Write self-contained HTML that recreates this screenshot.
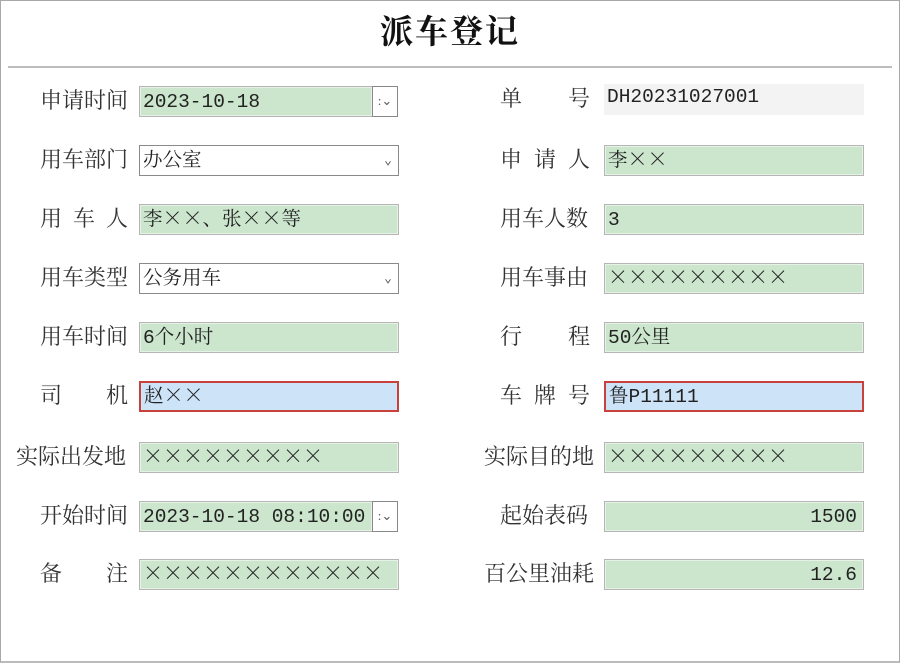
<!DOCTYPE html>
<html><head><meta charset="utf-8"><style>
*{margin:0;padding:0;box-sizing:border-box}
body{width:900px;height:663px;background:#fff;position:relative;overflow:hidden;font-family:"Liberation Serif","Noto Serif CJK SC",serif;color:#222}
.frame{position:absolute;left:0;top:0;width:900px;height:663px;border:1px solid #a8a8a8;border-bottom:2px solid #bbb}
.title{position:absolute;left:0;width:900px;top:6px;text-align:center;font-size:33px;font-weight:bold;letter-spacing:2px;color:#111}
.hr{position:absolute;left:8px;right:8px;top:66px;height:2px;background:#bdbdbd}
.lab{position:absolute;height:30px;line-height:30px;font-size:22px;display:flex;justify-content:space-between;color:#333}
.f{position:absolute;height:31px;line-height:30px;font-size:19.5px;padding-left:3px;white-space:pre;overflow:hidden;font-family:"Liberation Mono","Noto Serif CJK SC",monospace;color:#222}
.x{font-family:"Noto Sans CJK SC",sans-serif;font-size:20px;font-weight:300;line-height:0}
.g{background:#cbe6cd;border:1px solid #b5b5b5;box-shadow:inset 0 0 0 1px #e6f2e6}
.w{background:#fff;border:1px solid #8a8a8a}
.b{background:#cce3f8;border:2px solid #c8413b;line-height:28px}
.btn{position:absolute;width:26px;height:31px;border:1px solid #888;background:#fff;font-size:13px;line-height:28px;text-align:center;color:#555}
.arr{position:absolute;right:6px;top:0;font-size:13px;color:#555}
.r{text-align:right;padding-right:6px}
</style></head><body>
<div class="frame"></div>
<div class="title">派车登记</div>
<div class="hr"></div>

<div class="lab" style="left:40px;width:88px;top:86px"><span>申请时间</span></div>
<div class="lab" style="left:40px;width:88px;top:145px"><span>用车部门</span></div>
<div class="lab" style="left:40px;width:88px;top:204px"><span>用</span><span>车</span><span>人</span></div>
<div class="lab" style="left:40px;width:88px;top:263px"><span>用车类型</span></div>
<div class="lab" style="left:40px;width:88px;top:322px"><span>用车时间</span></div>
<div class="lab" style="left:40px;width:88px;top:381px"><span>司</span><span>机</span></div>
<div class="lab" style="left:16px;width:112px;top:442px"><span>实际出发地</span></div>
<div class="lab" style="left:40px;width:88px;top:501px"><span>开始时间</span></div>
<div class="lab" style="left:40px;width:88px;top:559px"><span>备</span><span>注</span></div>

<div class="f g" style="left:139px;top:86px;width:234px">2023-10-18</div>
<div class="btn" style="left:372px;top:86px">:⌄</div>
<div class="f w" style="left:139px;top:145px;width:260px">办公室<span class="arr">⌄</span></div>
<div class="f g" style="left:139px;top:204px;width:260px">李<span class="x">××</span>、张<span class="x">××</span>等</div>
<div class="f w" style="left:139px;top:263px;width:260px">公务用车<span class="arr">⌄</span></div>
<div class="f g" style="left:139px;top:322px;width:260px">6个小时</div>
<div class="f b" style="left:139px;top:381px;width:260px">赵<span class="x">××</span></div>
<div class="f g" style="left:139px;top:442px;width:260px"><span class="x">×××××××××</span></div>
<div class="f g" style="left:139px;top:501px;width:234px">2023-10-18 08:10:00</div>
<div class="btn" style="left:372px;top:501px">:⌄</div>
<div class="f g" style="left:139px;top:559px;width:260px"><span class="x">××××××××××××</span></div>

<div class="lab" style="left:500px;width:90px;top:84px"><span>单</span><span>号</span></div>
<div class="lab" style="left:500px;width:90px;top:145px"><span>申</span><span>请</span><span>人</span></div>
<div class="lab" style="left:500px;width:90px;top:204px"><span>用车人数</span></div>
<div class="lab" style="left:500px;width:90px;top:263px"><span>用车事由</span></div>
<div class="lab" style="left:500px;width:90px;top:322px"><span>行</span><span>程</span></div>
<div class="lab" style="left:500px;width:90px;top:381px"><span>车</span><span>牌</span><span>号</span></div>
<div class="lab" style="left:484px;width:110px;top:442px"><span>实际目的地</span></div>
<div class="lab" style="left:500px;width:90px;top:501px"><span>起始表码</span></div>
<div class="lab" style="left:484px;width:110px;top:559px"><span>百公里油耗</span></div>

<div class="f" style="left:604px;top:84px;width:260px;background:#f3f3f3;line-height:27px">DH20231027001</div>
<div class="f g" style="left:604px;top:145px;width:260px">李<span class="x">××</span></div>
<div class="f g" style="left:604px;top:204px;width:260px">3</div>
<div class="f g" style="left:604px;top:263px;width:260px"><span class="x">×××××××××</span></div>
<div class="f g" style="left:604px;top:322px;width:260px">50公里</div>
<div class="f b" style="left:604px;top:381px;width:260px">鲁P11111</div>
<div class="f g" style="left:604px;top:442px;width:260px"><span class="x">×××××××××</span></div>
<div class="f g r" style="left:604px;top:501px;width:260px">1500</div>
<div class="f g r" style="left:604px;top:559px;width:260px">12.6</div>
</body></html>
